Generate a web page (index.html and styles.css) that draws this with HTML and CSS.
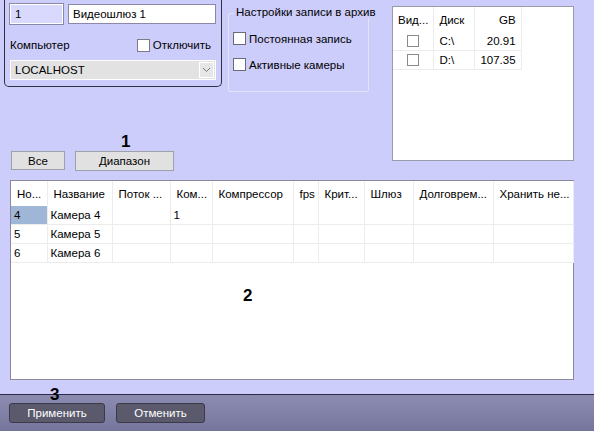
FILE: index.html
```html
<!DOCTYPE html>
<html>
<head>
  <meta charset="UTF-8">
  <title>Видеошлюз</title>
  <link rel="stylesheet" href="styles.css">
</head>
<body>
  <div class="main">
    <div class="top">
      <div class="left-col">
        <div class="top-row">
          <div class="gateway-panel">
            <div class="id-row">
              <div class="field field-id">1</div>
              <div class="field field-name">Видеошлюз 1</div>
            </div>
            <div class="pc-row">
              <span>Компьютер</span>
              <label class="check"><span class="box"></span>Отключить</label>
            </div>
            <div class="select">
              <span>LOCALHOST</span>
              <span class="select-btn">
                <svg width="9" height="6" viewBox="0 0 9 6"><path d="M1 1 L4.5 4.5 L8 1" fill="none" stroke="#777" stroke-width="1"/></svg>
              </span>
            </div>
          </div>
          <div class="groupbox">
            <div class="groupbox-title">Настройки записи в архив</div>
            <label class="check"><span class="box"></span>Постоянная запись</label>
            <label class="check"><span class="box"></span>Активные камеры</label>
          </div>
        </div>
        <div class="marker marker-1">1</div>
        <div class="filter-row">
          <button class="btn btn-all">Все</button>
          <button class="btn btn-range">Диапазон</button>
        </div>
      </div>
      <div class="disk-list">
        <table class="disks">
          <tr><th class="c-vid">Вид...</th><th class="c-disk">Диск</th><th class="c-gb num">GB</th></tr>
          <tr><td class="center"><span class="box"></span></td><td>C:\</td><td class="num">20.91</td></tr>
          <tr><td class="center"><span class="box"></span></td><td>D:\</td><td class="num">107.35</td></tr>
        </table>
      </div>
    </div>

    <div class="cams">
      <table class="cam-table">
        <colgroup>
          <col style="width:36px"><col style="width:65px"><col style="width:58px"><col style="width:42px">
          <col style="width:81px"><col style="width:25px"><col style="width:46px"><col style="width:49px">
          <col style="width:80px"><col style="width:80px">
        </colgroup>
        <tr>
          <th>Но...</th><th>Название</th><th>Поток ...</th><th>Ком...</th><th>Компрессор</th>
          <th>fps</th><th>Крит...</th><th>Шлюз</th><th>Долговрем...</th><th>Хранить не...</th>
        </tr>
        <tr><td class="selected">4</td><td>Камера 4</td><td></td><td>1</td><td></td><td></td><td></td><td></td><td></td><td></td></tr>
        <tr><td>5</td><td>Камера 5</td><td></td><td></td><td></td><td></td><td></td><td></td><td></td><td></td></tr>
        <tr><td>6</td><td>Камера 6</td><td></td><td></td><td></td><td></td><td></td><td></td><td></td><td></td></tr>
      </table>
      <div class="marker marker-2">2</div>
    </div>
  </div>

  <div class="footer">
    <div class="marker marker-3">3</div>
    <button class="dark-btn btn-apply">Применить</button>
    <button class="dark-btn btn-cancel">Отменить</button>
  </div>
</body>
</html>
```

FILE: styles.css
```css
html, body {
  margin: 0;
  padding: 0;
}
body {
  width: 594px;
  height: 431px;
  overflow: hidden;
  background-color: #cdcdfb;
  font-family: "Liberation Sans", Arial, sans-serif;
  font-size: 11.5px;
  color: #000;
  display: flex;
  flex-direction: column;
}
.main {
  flex: 1;
  display: flex;
  flex-direction: column;
}
.top {
  display: flex;
  align-items: flex-start;
}
.left-col {
  width: 380px;
  display: flex;
  flex-direction: column;
}
.top-row {
  display: flex;
  align-items: flex-start;
}

/* gateway panel */
.gateway-panel {
  margin-left: 4px;
  width: 206px;
  height: 82px;
  padding: 4px 5px 0 5px;
  border: 1px solid #303040;
  border-top: none;
  border-radius: 0 0 5px 5px;
  box-sizing: content-box;
}
.id-row {
  display: flex;
  gap: 5px;
}
.field {
  height: 18px;
  line-height: 18px;
  border: 1px solid #8a8aa8;
  padding: 0 4px;
  box-sizing: content-box;
}
.field-id {
  width: 43px;
  background-color: #d9d9fd;
  border-color: #ffffff;
  outline: 1px solid #8a8aa8;
}
.field-name {
  flex: 1;
  background-color: #fff;
}
.pc-row {
  display: flex;
  justify-content: space-between;
  align-items: center;
  margin-top: 13px;
  height: 16px;
  padding-right: 5px;
}
.check {
  display: flex;
  align-items: center;
  gap: 3px;
}
.box {
  display: inline-block;
  width: 11px;
  height: 11px;
  border: 1px solid #7a7a8a;
  background-color: #fff;
}
.select {
  margin-top: 7px;
  height: 18px;
  border: 1px solid #fff;
  background-color: #e2e2e2;
  display: flex;
  align-items: center;
  justify-content: space-between;
  padding-left: 4px;
}
.select-btn {
  width: 15px;
  height: 16px;
  margin-right: 1px;
  border: 1px solid #fff;
  background-color: #e6e6e6;
  display: flex;
  align-items: center;
  justify-content: center;
  box-sizing: border-box;
}

/* recording settings */
.groupbox {
  margin-left: 6px;
  margin-top: 13px;
  width: 141px;
  height: 79px;
  border: 1px solid #e2e2f8;
  border-radius: 2px;
  position: relative;
  padding: 18px 0 0 4px;
  box-sizing: border-box;
  display: flex;
  flex-direction: column;
  gap: 13px;
}
.groupbox-title {
  position: absolute;
  top: -8px;
  left: 5px;
  padding: 0 2px;
  white-space: nowrap;
  background-color: #cdcdfb;
}
.groupbox .box {
  border-color: #6a6a7a;
}

/* markers */
.marker {
  font-weight: bold;
  font-size: 17px;
}
.marker-1 {
  margin-top: 40px;
  margin-left: 121px;
  height: 19px;
  line-height: 19px;
}
.filter-row {
  display: flex;
  gap: 10px;
  margin-left: 11px;
}
.btn {
  font-family: inherit;
  font-size: 11.5px;
  height: 19px;
  padding: 0;
  background-color: #e1e1e1;
  border: 1px solid #a0a0a8;
  color: #000;
}
.btn-all {
  width: 54px;
}
.btn-range {
  width: 99px;
  height: 20px;
}

/* disk list */
.disk-list {
  margin-left: 12px;
  margin-top: 6px;
  width: 182px;
  height: 155px;
  background-color: #fff;
  border: 1px solid #9a9aa8;
  box-sizing: border-box;
}
.disks {
  border-collapse: collapse;
  margin: 0;
}
.disks th {
  font-weight: normal;
  height: 25px;
  border-right: 1px solid #ececec;
  padding: 0 5px;
  text-align: left;
}
.disks td {
  height: 18px;
  border-right: 1px solid #ececec;
  border-bottom: 1px solid #ececec;
  padding: 0 5px;
}
.c-vid { width: 30px; }
.c-disk { width: 30px; }
.c-gb { width: 29px; }
.disks .num {
  text-align: right;
}
.disks .center {
  text-align: center;
}
.disks .box {
  width: 10px;
  height: 10px;
  border-color: #8a8a8a;
  vertical-align: middle;
}

/* cameras table */
.cams {
  margin: 9px 0 0 10px;
  width: 564px;
  height: 200px;
  background-color: #fff;
  border: 1px solid #8a8a98;
  box-sizing: border-box;
  position: relative;
}
.cam-table {
  border-collapse: collapse;
  table-layout: fixed;
  width: 562px;
}
.cam-table th {
  font-weight: normal;
  text-align: left;
  height: 25px;
  padding: 0 0 0 6px;
  border-right: 1px solid #ececec;
  white-space: nowrap;
  overflow: hidden;
}
.cam-table td {
  height: 18px;
  padding: 0 0 0 3px;
  border-right: 1px solid #ececec;
  border-bottom: 1px solid #ececec;
  white-space: nowrap;
  overflow: hidden;
}
.cam-table td.selected {
  background-color: #a0b6d6;
}
.marker-2 {
  position: absolute;
  left: 232px;
  top: 105px;
}

/* footer */
.footer {
  height: 36px;
  border-top: 1px solid #2c2c48;
  background: linear-gradient(#8c8cb2, #76769c);
  display: flex;
  align-items: center;
  gap: 11px;
  padding-left: 9px;
  position: relative;
}
.marker-3 {
  position: absolute;
  left: 50px;
  top: -10px;
}
.dark-btn {
  font-family: inherit;
  font-size: 11.5px;
  height: 20px;
  padding: 0;
  color: #fff;
  background-color: #5a5a6c;
  border: 1px solid #3a3a48;
  border-radius: 3px;
}
.btn-apply {
  width: 96px;
}
.btn-cancel {
  width: 89px;
}
```
